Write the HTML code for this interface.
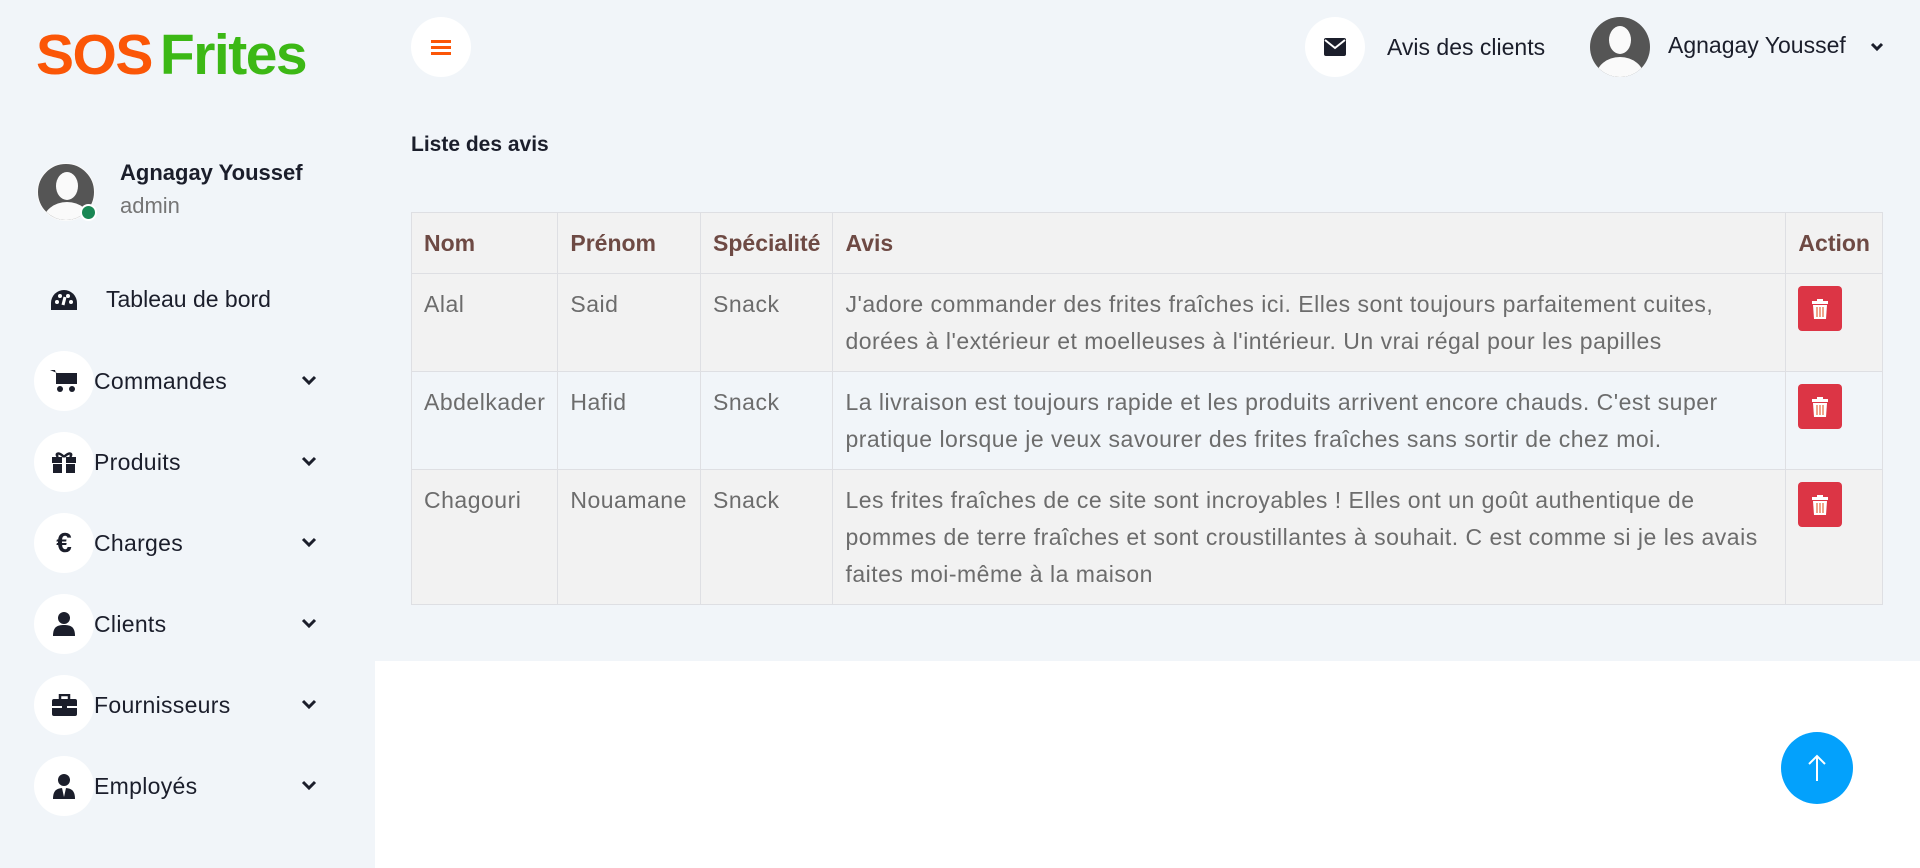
<!DOCTYPE html>
<html><head><meta charset="utf-8"><style>
*{margin:0;padding:0;box-sizing:border-box}
body{width:1920px;height:868px;background:#f1f5f9;font-family:"Liberation Sans",Arial,sans-serif;position:relative;overflow:hidden;color:#1b1e2b}
.abs{position:absolute}
.white{left:375px;top:661px;width:1545px;height:207px;background:#fff}
.logo{left:36px;top:22px;font-size:57px;font-weight:bold;letter-spacing:-1.5px;white-space:nowrap}
.circ{position:absolute;width:60px;height:60px;border-radius:50%;background:#fff;display:flex;align-items:center;justify-content:center}
.mi{position:absolute;left:94px;font-size:23px;font-weight:500;color:#1b1e2b;letter-spacing:0.3px}
.chev{position:absolute;left:301px}
table{position:absolute;left:411px;top:212px;width:1472px;border-collapse:collapse;font-size:23px;color:#6c6c6c}
td,th{border:1px solid #dedfe3;vertical-align:top;text-align:left;padding:0 12px;line-height:37px;white-space:nowrap}
td{letter-spacing:0.5px}
th{color:#6e4a44;font-weight:bold;height:61px;vertical-align:middle;background:#f2f2f2}
tr.o td{background:#f2f2f2}
tr.e td{background:#f1f5f9}
td{padding-top:12px;padding-bottom:11px}
.trash{width:44px;height:45px;background:#dc3545;border-radius:4px;display:flex;align-items:center;justify-content:center;margin-top:0}
</style></head><body>
<div class="abs white"></div>
<div class="abs logo"><span style="color:#fb5607">SOS</span><span style="color:#3cb815;margin-left:8px">Frites</span></div>

<!-- header -->
<div class="circ" style="left:411px;top:17px"><svg width="22" height="18" viewBox="0 0 22 18"><rect x="1" y="2" width="20" height="3" fill="#fb5607"/><rect x="1" y="8" width="20" height="3" fill="#fb5607"/><rect x="1" y="14" width="20" height="3" fill="#fb5607"/></svg></div>
<div class="circ" style="left:1305px;top:17px;width:60px;"><svg width="22" height="18" viewBox="0 0 22 18"><rect x="0" y="0" width="22" height="18" rx="2" fill="#1b1e2b"/><path d="M1 2 L11 10 L21 2" stroke="#fff" stroke-width="2" fill="none"/></svg></div>
<div class="abs" style="left:1387px;top:34px;font-size:23px;color:#1b1e2b">Avis des clients</div>
<div class="abs" style="left:1590px;top:17px;width:60px;height:60px;border-radius:50%;background:#555;overflow:hidden"><div class="abs" style="left:19px;top:9px;width:22px;height:28px;border-radius:50%;background:#fafafa"></div><div class="abs" style="left:6px;top:40px;width:48px;height:40px;border-radius:50%;background:#fafafa"></div></div>
<div class="abs" style="left:1668px;top:32px;font-size:23px;color:#1b1e2b">Agnagay Youssef</div>
<svg class="abs" style="left:1870px;top:42px" width="14" height="10" viewBox="0 0 14 10"><path d="M2 2 L7 7 L12 2" stroke="#1b1e2b" stroke-width="3" fill="none"/></svg>

<!-- sidebar user -->
<div class="abs" style="left:37px;top:163px;width:58px;height:58px;border-radius:50%;background:#555;overflow:hidden;border:1px solid #fafafa"><div class="abs" style="left:18px;top:8px;width:22px;height:28px;border-radius:50%;background:#fafafa"></div><div class="abs" style="left:5px;top:38px;width:48px;height:40px;border-radius:50%;background:#fafafa"></div></div>
<div class="abs" style="left:80px;top:204px;width:17px;height:17px;border-radius:50%;background:#198754;border:2px solid #fff"></div>
<div class="abs" style="left:120px;top:160px;font-size:22px;font-weight:bold">Agnagay Youssef</div>
<div class="abs" style="left:120px;top:193px;font-size:22px;color:#757575">admin</div>

<svg class="abs" style="left:50px;top:289px" width="28" height="22" viewBox="0 0 28 22"><path d="M14 1 A13 13 0 0 0 1 14 L1 21 L27 21 L27 14 A13 13 0 0 0 14 1Z" fill="#1b1e2b"/><circle cx="7" cy="13" r="2" fill="#fff"/><circle cx="10" cy="7" r="2" fill="#fff"/><circle cx="18" cy="7" r="2" fill="#fff"/><circle cx="21" cy="13" r="2" fill="#fff"/><path d="M15 8 L13 16" stroke="#fff" stroke-width="3"/></svg>
<div class="abs" style="left:106px;top:286px;font-size:23px;font-weight:500">Tableau de bord</div>

<!-- menu -->
<div class="circ" style="left:34px;top:351px"><svg width="28" height="24" viewBox="0 0 28 24"><path d="M0 1 H5 L9 15 H24 L27 4 H7" fill="#1b1e2b"/><rect x="6" y="4" width="21" height="11" fill="#1b1e2b"/><circle cx="10" cy="20" r="3" fill="#1b1e2b"/><circle cx="22" cy="20" r="3" fill="#1b1e2b"/></svg></div>
<div class="mi" style="top:368px">Commandes</div>
<div class="circ" style="left:34px;top:432px"><svg width="24" height="22" viewBox="0 0 24 22"><rect x="0" y="6" width="24" height="6" fill="#1b1e2b"/><rect x="1" y="13" width="22" height="9" fill="#1b1e2b"/><rect x="10" y="6" width="4" height="16" fill="#fff"/><path d="M12 6 C6 0 3 3 6 6 M12 6 C18 0 21 3 18 6" stroke="#1b1e2b" stroke-width="2.5" fill="none"/></svg></div>
<div class="mi" style="top:449px">Produits</div>
<div class="circ" style="left:34px;top:513px"><span style="font-size:28px;font-weight:bold">€</span></div>
<div class="mi" style="top:530px">Charges</div>
<div class="circ" style="left:34px;top:594px"><svg width="22" height="24" viewBox="0 0 22 24"><circle cx="11" cy="6" r="6" fill="#1b1e2b"/><path d="M0 24 C0 15 4 13 11 13 C18 13 22 15 22 24Z" fill="#1b1e2b"/></svg></div>
<div class="mi" style="top:611px">Clients</div>
<div class="circ" style="left:34px;top:675px"><svg width="25" height="22" viewBox="0 0 25 22"><path d="M8 5 V1 H17 V5" stroke="#1b1e2b" stroke-width="2.5" fill="none"/><rect x="0" y="5" width="25" height="17" rx="2" fill="#1b1e2b"/><rect x="0" y="12" width="25" height="2" fill="#fff"/><rect x="10" y="11" width="5" height="4" fill="#1b1e2b"/></svg></div>
<div class="mi" style="top:692px">Fournisseurs</div>
<div class="circ" style="left:34px;top:756px"><svg width="22" height="25" viewBox="0 0 22 25"><circle cx="11" cy="6" r="6" fill="#1b1e2b"/><path d="M0 25 C0 16 4 14 11 14 C18 14 22 16 22 25Z" fill="#1b1e2b"/><path d="M9 14 L11 23 L13 14Z" fill="#fff"/></svg></div>
<div class="mi" style="top:773px">Employés</div>
<svg class="chev" style="top:375px" width="16" height="12" viewBox="0 0 16 12"><path d="M2 2 L8 8 L14 2" stroke="#1b1e2b" stroke-width="3" fill="none"/></svg>
<svg class="chev" style="top:456px" width="16" height="12" viewBox="0 0 16 12"><path d="M2 2 L8 8 L14 2" stroke="#1b1e2b" stroke-width="3" fill="none"/></svg>
<svg class="chev" style="top:537px" width="16" height="12" viewBox="0 0 16 12"><path d="M2 2 L8 8 L14 2" stroke="#1b1e2b" stroke-width="3" fill="none"/></svg>
<svg class="chev" style="top:618px" width="16" height="12" viewBox="0 0 16 12"><path d="M2 2 L8 8 L14 2" stroke="#1b1e2b" stroke-width="3" fill="none"/></svg>
<svg class="chev" style="top:699px" width="16" height="12" viewBox="0 0 16 12"><path d="M2 2 L8 8 L14 2" stroke="#1b1e2b" stroke-width="3" fill="none"/></svg>
<svg class="chev" style="top:780px" width="16" height="12" viewBox="0 0 16 12"><path d="M2 2 L8 8 L14 2" stroke="#1b1e2b" stroke-width="3" fill="none"/></svg>

<div class="abs" style="left:411px;top:133px;font-size:21px;font-weight:bold">Liste des avis</div>

<table>
<colgroup><col style="width:146px"><col style="width:143px"><col style="width:131px"><col style="width:957px"><col style="width:95px"></colgroup>
<tr><th>Nom</th><th>Prénom</th><th>Spécialité</th><th>Avis</th><th>Action</th></tr>
<tr class="o" style="height:97px"><td>Alal</td><td>Said</td><td>Snack</td><td>J'adore commander des frites fraîches ici. Elles sont toujours parfaitement cuites,<br>dorées à l'extérieur et moelleuses à l'intérieur. Un vrai régal pour les papilles</td><td><div class="trash"><svg width="16" height="20" viewBox="0 0 16 20"><rect x="0" y="2" width="16" height="3" fill="#fff"/><rect x="5" y="0" width="6" height="3" fill="#fff"/><path d="M1 6 H15 L14 20 H2Z" fill="#fff"/><path d="M5 8 V18 M8 8 V18 M11 8 V18" stroke="#e8734a" stroke-width="1.3"/></svg></div></td></tr>
<tr class="e" style="height:97px"><td>Abdelkader</td><td>Hafid</td><td>Snack</td><td>La livraison est toujours rapide et les produits arrivent encore chauds. C'est super<br>pratique lorsque je veux savourer des frites fraîches sans sortir de chez moi.</td><td><div class="trash"><svg width="16" height="20" viewBox="0 0 16 20"><rect x="0" y="2" width="16" height="3" fill="#fff"/><rect x="5" y="0" width="6" height="3" fill="#fff"/><path d="M1 6 H15 L14 20 H2Z" fill="#fff"/><path d="M5 8 V18 M8 8 V18 M11 8 V18" stroke="#e8734a" stroke-width="1.3"/></svg></div></td></tr>
<tr class="o" style="height:133px"><td>Chagouri</td><td>Nouamane</td><td>Snack</td><td>Les frites fraîches de ce site sont incroyables ! Elles ont un goût authentique de<br>pommes de terre fraîches et sont croustillantes à souhait. C est comme si je les avais<br>faites moi-même à la maison</td><td><div class="trash"><svg width="16" height="20" viewBox="0 0 16 20"><rect x="0" y="2" width="16" height="3" fill="#fff"/><rect x="5" y="0" width="6" height="3" fill="#fff"/><path d="M1 6 H15 L14 20 H2Z" fill="#fff"/><path d="M5 8 V18 M8 8 V18 M11 8 V18" stroke="#e8734a" stroke-width="1.3"/></svg></div></td></tr>
</table>

<div class="abs" style="left:1781px;top:732px;width:72px;height:72px;border-radius:50%;background:#03a1fc;display:flex;align-items:center;justify-content:center"><svg width="22" height="28" viewBox="0 0 22 28"><path d="M11 27 V2 M3 10 L11 2 L19 10" stroke="#fff" stroke-width="2" fill="none"/></svg></div>
</body></html>
